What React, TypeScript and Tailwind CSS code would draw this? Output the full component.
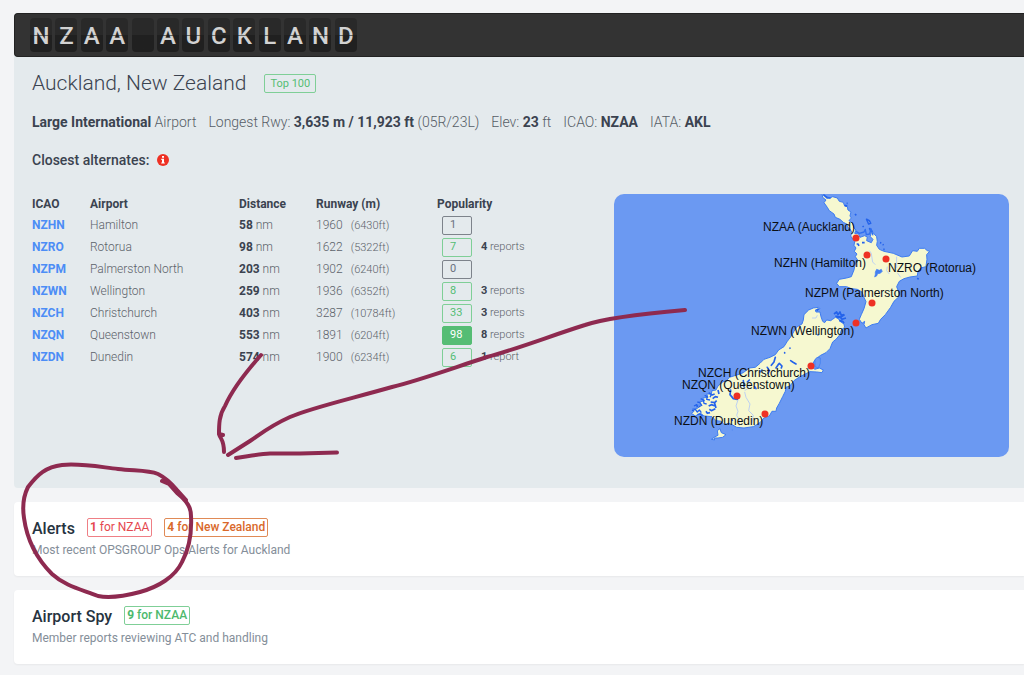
import type { ReactNode } from "react";

type Alternate = {
  icao: string;
  airport: string;
  distance: number;
  runway: number;
  feet: number;
  popularity: number;
  reports: number;
};

const alternates: Alternate[] = [
  { icao: "NZHN", airport: "Hamilton", distance: 58, runway: 1960, feet: 6430, popularity: 1, reports: 0 },
  { icao: "NZRO", airport: "Rotorua", distance: 98, runway: 1622, feet: 5322, popularity: 7, reports: 4 },
  { icao: "NZPM", airport: "Palmerston North", distance: 203, runway: 1902, feet: 6240, popularity: 0, reports: 0 },
  { icao: "NZWN", airport: "Wellington", distance: 259, runway: 1936, feet: 6352, popularity: 8, reports: 3 },
  { icao: "NZCH", airport: "Christchurch", distance: 403, runway: 3287, feet: 10784, popularity: 33, reports: 3 },
  { icao: "NZQN", airport: "Queenstown", distance: 553, runway: 1891, feet: 6204, popularity: 98, reports: 8 },
  { icao: "NZDN", airport: "Dunedin", distance: 574, runway: 1900, feet: 6234, popularity: 6, reports: 1 },
];

const pins = [
  { label: "NZAA (Auckland)", x: 149, y: 37, cx: 242, cy: 44 },
  { label: "NZHN (Hamilton)", x: 160, y: 73, cx: 253, cy: 61 },
  { label: "NZRO (Rotorua)", x: 274, y: 78, cx: 272, cy: 65 },
  { label: "NZPM (Palmerston North)", x: 191, y: 103, cx: 258, cy: 109 },
  { label: "NZWN (Wellington)", x: 137, y: 141, cx: 242, cy: 129 },
  { label: "NZCH (Christchurch)", x: 84, y: 183, cx: 197, cy: 172 },
  { label: "NZQN (Queenstown)", x: 68, y: 195, cx: 123, cy: 202 },
  { label: "NZDN (Dunedin)", x: 60, y: 231, cx: 151, cy: 220 },
];

function popularityStyle(n: number) {
  if (n > 50) return "border-[#55bd74] bg-[#55bd74] text-white font-medium";
  if (n > 1) return "border-[#7fcf97] text-[#55bd74]";
  return "border-[#7d838b] text-[#6b7280]";
}

/* =====================
   Split-flap header
====================== */
function FlapBoard({ text }: { text: string }) {
  return (
    <header className="rounded-l border border-r-0 border-[#222] bg-[#333] py-1 pl-[15px]">
      <h1 className="flex w-[327px] justify-between" aria-label={text}>
        {text.split("").map((c, i) => (
          <span
            key={i}
            className="relative flex h-[34px] w-[22px] items-center justify-center rounded bg-linear-to-b from-[#292929] from-50% to-[#202020] to-50% pt-0.5 text-[24px] font-medium leading-none text-[#d2d2d2]"
          >
            {c}
            <span className="absolute inset-x-0 top-[17px] h-px bg-[#222]/60" />
          </span>
        ))}
      </h1>
    </header>
  );
}

/* =====================
   Map
====================== */
function AlternatesMap() {
  return (
    <svg
      viewBox="0 0 395 263"
      className="w-[395px] shrink-0 rounded-[10px] bg-[#6b99f2]"
      role="img"
      aria-label="Map of New Zealand"
    >
      <g transform="scale(0.3333) translate(-12 -12)" fill="#f6f8d0" stroke="#3d7bf0" strokeWidth="3" strokeLinejoin="round">
        {/* North Island */}
        <g transform="translate(570 0)">
          <path d="M66 8 L76 18 L90 24 L98 20 L112 24 L118 34 L130 37 L134 48 L142 50 L144 60 L153 66 L150 78 L154 84 L147 92 L158 100 L162 114 L168 120 L164 130 L176 132 L180 142 L194 137 L202 141 L200 152 L214 158 L219 148 L211 140 L214 128 L208 118 L216 120 L219 128 L230 140 L232 154 L230 166 L238 178 L252 184 L280 190 L306 201 L328 198 L338 182 L352 184 L358 175 L374 175 L382 182 L389 184 L380 194 L381 208 L378 230 L362 234 L354 244 L352 258 L330 261 L312 266 L298 274 L290 290 L296 305 L297 320 L282 334 L272 352 L256 374 L242 388 L235 400 L216 404 L198 414 L192 404 L194 394 L186 400 L178 388 L184 374 L192 356 L198 335 L192 322 L186 306 L172 298 L154 296 L140 290 L118 290 L110 280 L118 268 L140 264 L154 260 L162 240 L166 222 L173 210 L166 200 L171 192 L163 184 L168 174 L162 166 L165 152 L160 150 L152 138 L156 128 L150 116 L143 112 L144 104 L130 97 L120 88 L106 82 L102 72 L88 62 L82 52 L72 38 L78 30 L68 22Z" />
          <path
            d="M226 246 l4 -8 l8 3 l6 -3 l3 6 l-6 6 l-8 1 l-3 7 l-6 3 l2 -8Z"
            fill="#4480f2"
            stroke="#4480f2"
            strokeWidth="2"
          />
          <path d="M200 88 L208 92 L212 100 L206 102Z M208 114 L216 126 M140 40 h3 M165 72 l4 4 M188 108 l3 3 M240 158 l4 1 M248 163 l3 2 M250 178 h4 M352 264 l4 4" stroke="#2463eb" strokeWidth="5" />
          <path d="M168 124 l10 6 l14 -4 l4 -8 l3 16 l10 -2 l4 -16 l6 20" fill="none" stroke="#2f6ff0" strokeWidth="4" />
          <path d="M170 162 h4 l3 6 M186 158 h8 M70 14 l12 10 l10 0 M134 46 l8 2" fill="none" stroke="#2463eb" strokeWidth="5" />
          <path d="M208 182 l6 8 l2 14 l2 12 l8 8 M262 204 l-6 12 M262 230 l-2 12 l8 10 M290 200 v34 M292 248 l10 14" fill="none" stroke="#bcd0f2" strokeWidth="3" />
        </g>

        {/* South Island */}
        <path d="M582 374 L596 360 L610 354 L626 352 L630 356 L616 360 L618 366 L630 366 L633 380 L638 394 L644 398 L650 390 L662 392 L668 388 L676 382 L684 384 L690 394 L702 402 L704 412 L694 420 L690 434 L678 448 L668 456 L660 476 L648 488 L632 496 L616 508 L604 528 L614 538 L628 534 L640 540 L636 548 L620 546 L600 545 L586 552 L570 560 L552 572 L540 588 L528 592 L526 604 L518 620 L508 640 L500 654 L498 664 L486 664 L478 678 L462 684 L450 698 L430 710 L402 714 L380 712 L366 704 L356 700 L342 704 L334 694 L318 692 L306 680 L282 678 L272 670 L256 678 L244 670 L252 664 L248 656 L262 656 L258 646 L274 646 L268 636 L284 632 L278 624 L294 622 L290 612 L304 612 L306 602 L318 600 L324 588 L338 576 L350 572 L358 562 L384 554 L400 548 L418 534 L436 532 L450 520 L462 508 L480 502 L496 494 L506 480 L522 470 L532 454 L544 438 L552 424 L562 410 L576 402 L580 390Z" />
        <path d="M615 510 l6 -8 l10 2 v16 l-6 14 l-10 -4Z" fill="#6b99f2" strokeWidth="2" />
        {/* Sounds and fiords */}
        <path
          d="M672 372 l8 -6 l4 8 l6 -8 l4 10 l8 -2 M680 384 l10 -4 l6 8 l12 -4 M676 378 l16 4 l12 -8 M688 392 l10 2 l4 6 M626 356 l-6 6"
          fill="none"
          stroke="#2463eb"
          strokeWidth="5"
        />
        <path
          d="M252 648 l8 -4 l4 8 l8 -4 M246 662 l10 -4 l6 8 l6 -6 l6 8 M262 636 l8 2 l6 10 M272 626 l8 4 l2 10 l8 2 M284 616 l8 4 l-2 8 l10 2 M296 608 l8 6 l-4 8 M262 674 l8 -2 l8 6"
          fill="none"
          stroke="#2463eb"
          strokeWidth="4"
        />
        <path
          d="M308 626 l8 -6 l8 2 M302 636 l12 2 l6 -6 M296 648 l8 -4 l12 4 M298 658 l6 4 l12 -6 M304 616 l10 -4 M324 600 l3 12 M288 664 l4 6 l8 -2 M314 640 l4 14"
          fill="none"
          stroke="#2463eb"
          strokeWidth="5"
        />
        <path
          d="M362 600 l-2 14 l10 12 l12 2 M400 572 l2 18 M412 576 l6 -6 M472 532 l6 10 l-4 8 M484 526 l8 -10 l4 -14 M498 534 l8 -12 M508 520 l8 8 l-2 6 M542 512 l6 4 l10 6 M450 546 l6 -6 M434 590 l4 6 M524 488 v1 M540 474 v1 M624 434 v1 M367 690 v1"
          fill="none"
          stroke="#2463eb"
          strokeWidth="5"
          strokeLinecap="round"
        />
        <path
          d="M384 630 l-6 18 l6 16 l-4 12 l8 14 v18 M404 606 l4 16 l12 20 l-4 20 l14 14 l-4 22 M420 576 l-4 18 l-12 8 M606 384 h12 l4 -8"
          fill="none"
          stroke="#bcd0f2"
          strokeWidth="3"
        />

        {/* Stewart Island */}
        <path d="M322 722 L330 716 L334 728 L348 734 L338 742 L324 744 L312 744 L314 750 L304 748 L312 742 L324 736Z M367 719 v2" strokeWidth="3" />
      </g>

      {pins.map((p) => (
        <circle key={p.label} cx={p.cx} cy={p.cy} r="3.5" fill="#ee3124" />
      ))}
      {pins.map((p) => (
        <text key={p.label} x={p.x} y={p.y} fill="#0b0f14" className="font-['Liberation_Sans',Arial,sans-serif] text-[12px]">
          {p.label}
        </text>
      ))}
    </svg>
  );
}

function AlternatesTable() {
  return (
    <table className="h-[174px] w-[520px] table-fixed border-collapse text-left text-[12px] text-[#5c626a]">
      <thead>
        <tr className="text-[#3b4350]">
          <th className="h-5 w-[58px] p-0 font-bold">ICAO</th>
          <th className="w-[149px] p-0 font-bold">Airport</th>
          <th className="w-[77px] p-0 font-bold">Distance</th>
          <th className="w-[121px] p-0 font-bold">Runway (m)</th>
          <th className="p-0 font-bold">Popularity</th>
        </tr>
      </thead>
      <tbody className="font-light">
        {alternates.map((a) => (
          <tr key={a.icao}>
            <td className="h-5 p-0">
              <a href={`#${a.icao}`} className="font-bold text-[#4c8df6]">
                {a.icao}
              </a>
            </td>
            <td className="p-0">{a.airport}</td>
            <td className="p-0">
              <b className="font-bold text-[#3b4350]">{a.distance}</b> nm
            </td>
            <td className="p-0">
              {a.runway}
              <span className="ml-2 text-[11px]">({a.feet}ft)</span>
            </td>
            <td className="p-0">
              <div className="flex items-center gap-[9px] pl-[5px] text-[11px]">
                <span className={`flex h-[19px] w-[30px] items-center rounded-xs border pl-[7px] font-normal ${popularityStyle(a.popularity)}`}>
                  {a.popularity}
                </span>
                {a.reports > 0 && (
                  <span>
                    <b className="font-bold text-[#3b4350]">{a.reports}</b> {a.reports === 1 ? "report" : "reports"}
                  </span>
                )}
              </div>
            </td>
          </tr>
        ))}
      </tbody>
    </table>
  );
}

function InfoCard({ title, subtitle, children }: { title: string; subtitle: string; children: ReactNode }) {
  return (
    <section className="mt-[14px] h-[74px] rounded-l bg-white pl-[18px] pt-4 shadow-xs">
      <div className="flex items-start">
        <h2 className="text-[16px] font-medium leading-[22px] text-[#263340]">{title}</h2>
        <div className="ml-3 flex gap-3 text-[12px]">{children}</div>
      </div>
      <p className="mt-px text-[12px] leading-[18px] text-[#848e99]">{subtitle}</p>
    </section>
  );
}

/* =====================
   Hand-drawn markup
====================== */
function Markup() {
  return (
    <svg
      width="1024"
      height="675"
      viewBox="0 0 1024 675"
      className="pointer-events-none absolute left-0 top-0"
      fill="none"
      stroke="#8e2a50"
      strokeWidth="4"
      strokeLinecap="round"
      strokeLinejoin="round"
      aria-hidden="true"
    >
      <path d="M685 310 C640 314 605 318 585 325 C550 336 520 348 487 357 C450 369 420 380 392 387 C350 399 310 408 290 417 C270 426 262 433 250 441 L228 455" />
      <path d="M261 355 C245 373 232 390 225 406 C219 415 219 425 219 434 L223 435 M219 434 C221 440 224 440 224 452" />
      <path d="M236 458 C250 456 260 454 270 453.500 L300 453.500 L337 452.500" />
      <path d="M162 481 L169 484 L177 493 C188 502 191 508 191 516 C192 535 189 549 182 562 C175 577 158 587 140 592 C125 596 108 598 98 596 C80 589 65 586 52 574 C36 558 27 540 24 518 C22 505 24 495 28 487 C38 474 46 467 62 465 C80 463 100 467 118 469 C135 471 148 470 158 474 C166 478 172 484 177 490 L186 500" />
    </svg>
  );
}

export default function App() {
  return (
    <div className="relative min-h-screen overflow-x-hidden bg-[#f3f4f6] pl-[14px] pt-[13px] font-[Roboto,sans-serif]">
      <main>
        <section className="rounded-l bg-[#e4eaed] pb-[31px]">
          <FlapBoard text="NZAA AUCKLAND" />

          <div className="pl-[18px] pr-[15px]">
            <div className="flex items-center gap-[18px] pt-3">
              <h2 className="text-[21px] font-light leading-7 text-[#3b4350]">Auckland, New Zealand</h2>
              <span className="rounded-xs border border-[#7fcf97] px-[5px] text-[11px] leading-[17px] text-[#55bd74]">
                Top 100
              </span>
            </div>

            <div className="mt-[15px] flex gap-3 text-[14px] font-light leading-5 text-[#565d66] [&_b]:font-bold [&_b]:text-[#3b4350]">
              <span><b>Large International</b> Airport</span>
              <span>Longest Rwy: <b>3,635 m / 11,923 ft</b> (05R/23L)</span>
              <span>Elev: <b>23</b> ft</span>
              <span>ICAO: <b>NZAA</b></span>
              <span>IATA: <b>AKL</b></span>
            </div>

            <div className="mt-[18px] flex items-center gap-2 text-[14px] font-medium leading-5 text-[#3b4350]">
              Closest alternates:
              <svg viewBox="0 0 12 12" className="size-3" aria-label="Info">
                <circle cx="6" cy="6" r="6" fill="#ee3124" />
                <path d="M5 2h2v1.700H5z M4.300 4.700H7v3.700h.8v1.200H4.200V8.400H5V5.900h-.7z" fill="#fff" />
              </svg>
            </div>

            <div className="mt-6 flex items-start justify-between">
              <AlternatesTable />
              <AlternatesMap />
            </div>
          </div>
        </section>

        <InfoCard title="Alerts" subtitle="Most recent OPSGROUP Ops Alerts for Auckland">
          <span className="rounded-xs border border-[#ef7f85] px-0.5 leading-[17px] text-[#e5484f]">
            <b className="font-bold">1</b> for NZAA
          </span>
          <span className="rounded-xs border border-[#e08a56] px-0.5 font-medium leading-[17px] text-[#d9692b]">
            <b className="font-bold">4</b> for New Zealand
          </span>
        </InfoCard>

        <InfoCard title="Airport Spy" subtitle="Member reports reviewing ATC and handling">
          <span className="rounded-xs border border-[#7fcf97] px-0.5 font-medium leading-[17px] text-[#4cb96d]">
            <b className="font-bold">9</b> for NZAA
          </span>
        </InfoCard>
      </main>

      <Markup />
    </div>
  );
}
